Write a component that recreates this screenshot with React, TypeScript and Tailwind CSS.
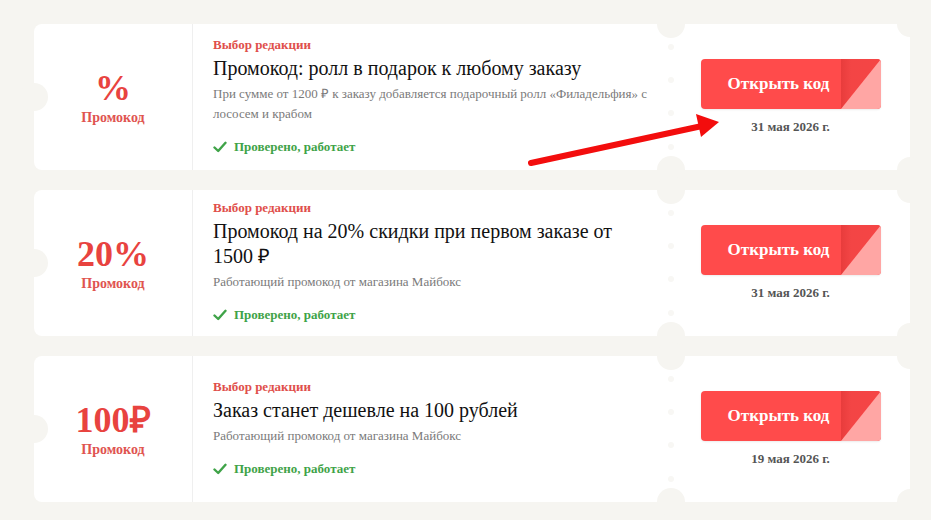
import React from "react";

const BG = "#f6f5f1";

type Promo = {
  big: string;
  title: string;
  desc: string;
  date: string;
};

const promos: Promo[] = [
  {
    big: "%",
    title: "Промокод: ролл в подарок к любому заказу",
    desc: "При сумме от 1200 ₽ к заказу добавляется подарочный ролл «Филадельфия» с лососем и крабом",
    date: "31 мая 2026 г.",
  },
  {
    big: "20%",
    title: "Промокод на 20% скидки при первом заказе от 1500 ₽",
    desc: "Работающий промокод от магазина Майбокс",
    date: "31 мая 2026 г.",
  },
  {
    big: "100₽",
    title: "Заказ станет дешевле на 100 рублей",
    desc: "Работающий промокод от магазина Майбокс",
    date: "19 мая 2026 г.",
  },
];

function Check() {
  return (
    <svg width="14" height="12" viewBox="0 0 14 12" className="shrink-0">
      <path d="M1.5 6.5 L5.2 10 L12.5 1.8" fill="none" stroke="#3fa348" strokeWidth="2.4" strokeLinecap="round" strokeLinejoin="round" />
    </svg>
  );
}

function Card({ p }: { p: Promo }) {
  return (
    <div className="relative flex h-[146px] w-[876px] rounded-lg bg-white">
      {/* left notch */}
      <div className="absolute left-[-14px] top-[59px] h-[28px] w-[28px] rounded-full bg-[#f6f5f1]" />
      {/* right corner notches */}
      <div className="absolute right-[-13px] top-[-13px] h-[26px] w-[26px] rounded-full bg-[#f6f5f1]" />
      <div className="absolute right-[-13px] bottom-[-13px] h-[26px] w-[26px] rounded-full bg-[#f6f5f1]" />
      {/* perforation */}
      <div className="absolute left-[623px] top-[-14px] h-[28px] w-[28px] rounded-full bg-[#f6f5f1]" />
      <div className="absolute left-[623px] bottom-[-14px] h-[28px] w-[28px] rounded-full bg-[#f6f5f1]" />
      <div className="absolute left-[634px] top-[20px] h-[6px] w-[6px] rounded-full bg-[#f8f7f4]" />
      <div className="absolute left-[634px] top-[53px] h-[6px] w-[6px] rounded-full bg-[#f8f7f4]" />
      <div className="absolute left-[634px] top-[86px] h-[6px] w-[6px] rounded-full bg-[#f8f7f4]" />
      <div className="absolute left-[634px] top-[120px] h-[6px] w-[6px] rounded-full bg-[#f8f7f4]" />

      {/* left */}
      <div className="flex w-[159px] shrink-0 flex-col items-center justify-center border-r border-[#efefef]">
        <div className="text-[36px] font-bold leading-[40px] text-[#e8433f]">{p.big}</div>
        <div className="mt-[1px] text-[14px] font-bold leading-[18px] text-[#e05450]">Промокод</div>
      </div>

      {/* middle */}
      <div className="flex w-[478px] shrink-0 flex-col justify-center pb-[3px] pl-[20px] pr-[18px]">
        <div className="text-[13px] font-bold leading-[16px] text-[#e04f4b]">Выбор редакции</div>
        <div className="mt-[3px] text-[20px] leading-[25px] text-[#111]">{p.title}</div>
        <div className="mt-[3px] text-[13px] leading-[20px] text-[#7a7a7a]">{p.desc}</div>
        <div className="mt-[15px] flex items-center gap-[7px]">
          <Check />
          <span className="text-[13px] font-bold leading-[16px] text-[#3fa348]">Проверено, работает</span>
        </div>
      </div>

      {/* right */}
      <div className="flex flex-1 flex-col items-center justify-center pl-[6px] pr-[6px]">
        <div className="flex h-[50px] w-[180px] overflow-hidden rounded-[4px] bg-[#ff4b4b] shadow-[0_1px_2px_rgba(0,0,0,0.08)]">
          <div className="flex flex-1 items-center justify-center pl-[16px] text-[17px] font-bold text-white">Открыть код</div>
          <svg width="40" height="50" viewBox="0 0 40 50" className="shrink-0">
            <defs>
              <linearGradient id="fs" x1="0" x2="1" y1="0" y2="0">
                <stop offset="0" stopColor="#e83c3c" />
                <stop offset="0.25" stopColor="#f34545" />
                <stop offset="1" stopColor="#f54545" />
              </linearGradient>
            </defs>
            <path d="M0 0 H40 L0 50 Z" fill="url(#fs)" />
            <path d="M40 0 V50 H0 Z" fill="#ffa6a4" />
          </svg>
        </div>
        <div className="mt-[10px] text-[13px] font-bold leading-[16px] text-[#555]">{p.date}</div>
      </div>
    </div>
  );
}

export default function App() {
  return (
    <div
      className="relative min-h-[520px] w-[931px] overflow-hidden bg-[#f6f5f1] pl-[34px] pt-[24px]"
      style={{ fontFamily: '"Liberation Serif", "Times New Roman", serif', backgroundColor: BG }}
    >
      <div className="flex flex-col gap-[20px]">
        {promos.map((p, i) => (
          <Card key={i} p={p} />
        ))}
      </div>
      <svg className="pointer-events-none absolute left-0 top-0" width="931" height="520" viewBox="0 0 931 520">
        <line x1="531" y1="163" x2="702" y2="126" stroke="#f30d0d" strokeWidth="6" strokeLinecap="round" />
        <path d="M696 114 L719 122 L701 137 Z" fill="#f30d0d" />
      </svg>
    </div>
  );
}
